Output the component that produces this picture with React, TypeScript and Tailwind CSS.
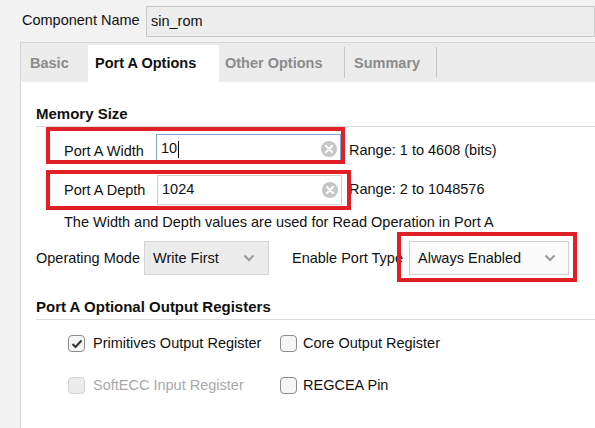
import React from "react";

const font = { fontFamily: '"Liberation Sans", Arial, sans-serif' };

function ClearIcon() {
  return (
    <svg width="16" height="16" viewBox="0 0 16 16" className="shrink-0">
      <circle cx="8" cy="8" r="8" fill="#c6c6c6" />
      <path d="M5 5 L11 11 M11 5 L5 11" stroke="#fff" strokeWidth="2.2" strokeLinecap="round" />
    </svg>
  );
}

function Chevron() {
  return (
    <svg width="12" height="8" viewBox="0 0 12 8" className="shrink-0">
      <path d="M1.5 1.5 L6 6 L10.5 1.5" stroke="#9a9a9a" strokeWidth="2" fill="none" />
    </svg>
  );
}

function Checkbox({ checked, disabled }: { checked?: boolean; disabled?: boolean }) {
  return (
    <div
      className={
        disabled
          ? "w-[17px] h-[17px] rounded-[4px] border border-[#d2d2d2] bg-[#ececec] shrink-0"
          : "w-[17px] h-[17px] rounded-[4px] border border-[#8c8c8c] bg-[#f6f6f6] shrink-0 flex items-center justify-center"
      }
    >
      {checked && (
        <svg width="12" height="10" viewBox="0 0 12 10">
          <path d="M1.5 5 L4.5 8 L10.5 1.5" stroke="#333" strokeWidth="2" fill="none" />
        </svg>
      )}
    </div>
  );
}

export default function App() {
  return (
    <div className="w-[595px] h-[428px] bg-[#f2f2f2] overflow-hidden text-[14.5px] text-[#111]" style={font}>
      {/* top row */}
      <div className="flex items-center pt-[6px]">
        <div className="w-[146px] pl-[22px] leading-[18px] -mt-[3px]">Component Name</div>
        <div className="flex-1 h-[31px] border border-[#cacaca] bg-[#ededed] pl-[4px] flex items-center">sin_rom</div>
      </div>

      {/* panel */}
      <div className="ml-[20px] mt-[5px] border-l border-t border-[#d6d6d6] h-[400px] flex flex-col">
        {/* tab strip */}
        <div className="h-[39px] bg-[#ececec] flex items-end font-bold">
          <div className="w-[67px] h-[37px] pl-[9px] flex items-center text-[#8b8b8b]">Basic</div>
          <div className="w-[131px] h-[37px] pl-[7px] flex items-center bg-white text-[#111]">Port A Options</div>
          <div className="w-[126px] h-[37px] pl-[6px] flex items-center text-[#8b8b8b] relative">
            Other Options
            <div className="absolute right-0 top-[2px] h-[31px] w-px bg-[#c6c6c6]" />
          </div>
          <div className="w-[92px] h-[37px] pl-[9px] flex items-center text-[#8b8b8b] relative">
            Summary
            <div className="absolute right-0 top-[2px] h-[31px] w-px bg-[#c6c6c6]" />
          </div>
        </div>

        {/* content */}
        <div className="flex-1 bg-white pl-[15px] relative">
          <div className="pt-[23px] pb-[3px] leading-[18px] font-bold text-[15px] border-b border-[#dcdcdc]">Memory Size</div>

          <div className="flex items-center mt-[7px] h-[30px]">
            <div className="w-[120px] pl-[28px] leading-[18px] mt-[3px]">Port A Width</div>
            <div className="w-[185px] h-[30px] border border-[#86a6d2] bg-white flex items-center pl-[4px] pr-[3px]">
              <span>10</span>
              <span className="w-px h-[17px] bg-black ml-[1px]" />
              <span className="flex-1" />
              <ClearIcon />
            </div>
            <div className="ml-[8px] mt-[3px]">Range: 1 to 4608 (bits)</div>
          </div>

          <div className="flex items-center mt-[11px] h-[30px]">
            <div className="w-[121px] pl-[28px] leading-[18px]">Port A Depth</div>
            <div className="w-[185px] h-[30px] border border-[#cfcfcf] bg-white flex items-center pl-[4px] pr-[3px]">
              <span>1024</span>
              <span className="flex-1" />
              <ClearIcon />
            </div>
            <div className="ml-[7px]">Range: 2 to 1048576</div>
          </div>

          <div className="mt-[8px] pl-[28px] leading-[18px]">
            The Width and Depth values are used for Read Operation in Port A
          </div>

          <div className="flex items-center mt-[10px] h-[34px]">
            <div className="w-[108px] mt-[1px]">Operating Mode</div>
            <div className="w-[125px] h-[34px] border border-[#d4d4d4] bg-[#ececec] flex items-center pl-[8px] pr-[13px]">
              <span className="flex-1 mt-[1px]">Write First</span>
              <Chevron />
            </div>
            <div className="ml-[23px] w-[117px] mt-[1px]">Enable Port Type</div>
            <div className="w-[160px] h-[34px] border border-[#d0d0d0] bg-[#fbfbfb] flex items-center pl-[8px] pr-[12px]">
              <span className="flex-1 mt-[1px]">Always Enabled</span>
              <Chevron />
            </div>
          </div>

          <div className="pt-[23px] pb-[3px] leading-[18px] font-bold text-[15px] border-b border-[#dcdcdc]">
            Port A Optional Output Registers
          </div>

          <div className="grid grid-cols-[212px_1fr] pl-[32px] mt-[15px] gap-y-[25px]">
            <div className="flex items-center gap-[8px] h-[17px]">
              <Checkbox checked />
              <span>Primitives Output Register</span>
            </div>
            <div className="flex items-center gap-[6px] h-[17px]">
              <Checkbox />
              <span>Core Output Register</span>
            </div>
            <div className="flex items-center gap-[8px] h-[17px]">
              <Checkbox disabled />
              <span className="text-[#a8a8a8]">SoftECC Input Register</span>
            </div>
            <div className="flex items-center gap-[6px] h-[17px]">
              <Checkbox />
              <span>REGCEA Pin</span>
            </div>
          </div>

          {/* red annotation boxes */}
          <div className="absolute left-[25px] top-[45px] w-[299px] h-[37px] border-[4px] border-[#e11f26] pointer-events-none" />
          <div className="absolute left-[25px] top-[88px] w-[305px] h-[40px] border-[4px] border-[#e11f26] pointer-events-none" />
          <div className="absolute left-[376px] top-[150px] w-[180px] h-[50px] border-[4px] border-[#e11f26] pointer-events-none" />
        </div>
      </div>
    </div>
  );
}
